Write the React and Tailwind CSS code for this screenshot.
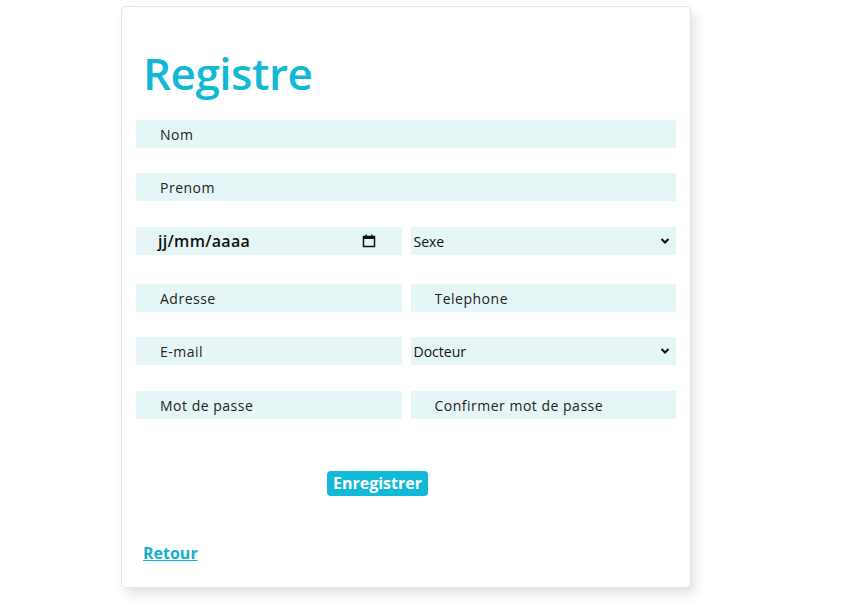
import React from 'react';

const font = { fontFamily: '"Open Sans", "Noto Sans", sans-serif' };

const Field = ({ placeholder, type = 'text' }) => (
  <input
    type={type}
    placeholder={placeholder}
    className="block h-[28px] w-full bg-[#e6f6f6] pl-6 text-[14px] tracking-[0.5px] text-[#222] outline-none placeholder:text-[#222]"
  />
);

const Select = ({ label }) => (
  <div className="flex h-[28px] w-full items-center justify-between bg-[#e6f6f6] pl-[3px] pr-[6px] text-[14px] text-[#111]">
    <span>{label}</span>
    <svg width="10" height="8" viewBox="0 0 10 8" fill="none">
      <path d="M1.5 2 L5 5.5 L8.5 2" stroke="#111" strokeWidth="2" />
    </svg>
  </div>
);

const App = () => {
  return (
    <div className="min-h-[603px] bg-white" style={font}>
      <div className="ml-[121px] mt-[6px] w-[570px] rounded-[5px] border border-[#e2e2e8] bg-white px-[14px] pb-[22px] pt-[36px] shadow-[4px_6px_12px_rgba(0,0,0,0.12)]">
        <h1 className="ml-[7px] text-[44px] font-semibold leading-[60px] tracking-[-0.5px] text-[#12b9d6]">Registre</h1>

        <div className="mt-[17px]">
          <Field placeholder="Nom" />
        </div>
        <div className="mt-[25px]">
          <Field placeholder="Prenom" />
        </div>

        <div className="mt-[26px] grid grid-cols-2 gap-x-[9px]">
          <div className="flex h-[28px] items-center justify-between bg-[#e6f6f6] pl-[22px] pr-[26px]">
            <span className="text-[16px] font-semibold tracking-[0.3px] text-[#111]">jj/mm/aaaa</span>
            <svg width="14" height="14" viewBox="0 0 14 14" fill="none">
              <rect x="1.5" y="2.5" width="11" height="10" stroke="#111" strokeWidth="1.5" />
              <rect x="1.5" y="2.5" width="11" height="2.5" fill="#111" />
              <rect x="3.5" y="0.5" width="1.5" height="2.5" fill="#111" />
              <rect x="9" y="0.5" width="1.5" height="2.5" fill="#111" />
            </svg>
          </div>
          <Select label="Sexe" />
        </div>

        <div className="mt-[29px] grid grid-cols-2 gap-x-[9px]">
          <Field placeholder="Adresse" />
          <Field placeholder="Telephone" />
        </div>

        <div className="mt-[25px] grid grid-cols-2 gap-x-[9px]">
          <Field placeholder="E-mail" type="email" />
          <Select label="Docteur" />
        </div>

        <div className="mt-[26px] grid grid-cols-2 gap-x-[9px]">
          <Field placeholder="Mot de passe" type="password" />
          <Field placeholder="Confirmer mot de passe" type="password" />
        </div>

        <div className="mt-[52px] flex pl-[191px]">
          <button className="h-[25px] rounded-[4px] bg-[#12b9d6] px-[6px] text-[16px] font-bold leading-[25px] text-white">
            Enregistrer
          </button>
        </div>

        <div className="mt-[45px] pl-[7px]">
          <a href="#" className="text-[16px] font-bold text-[#12b0d0] underline">Retour</a>
        </div>
      </div>
    </div>
  );
};

export default App;
